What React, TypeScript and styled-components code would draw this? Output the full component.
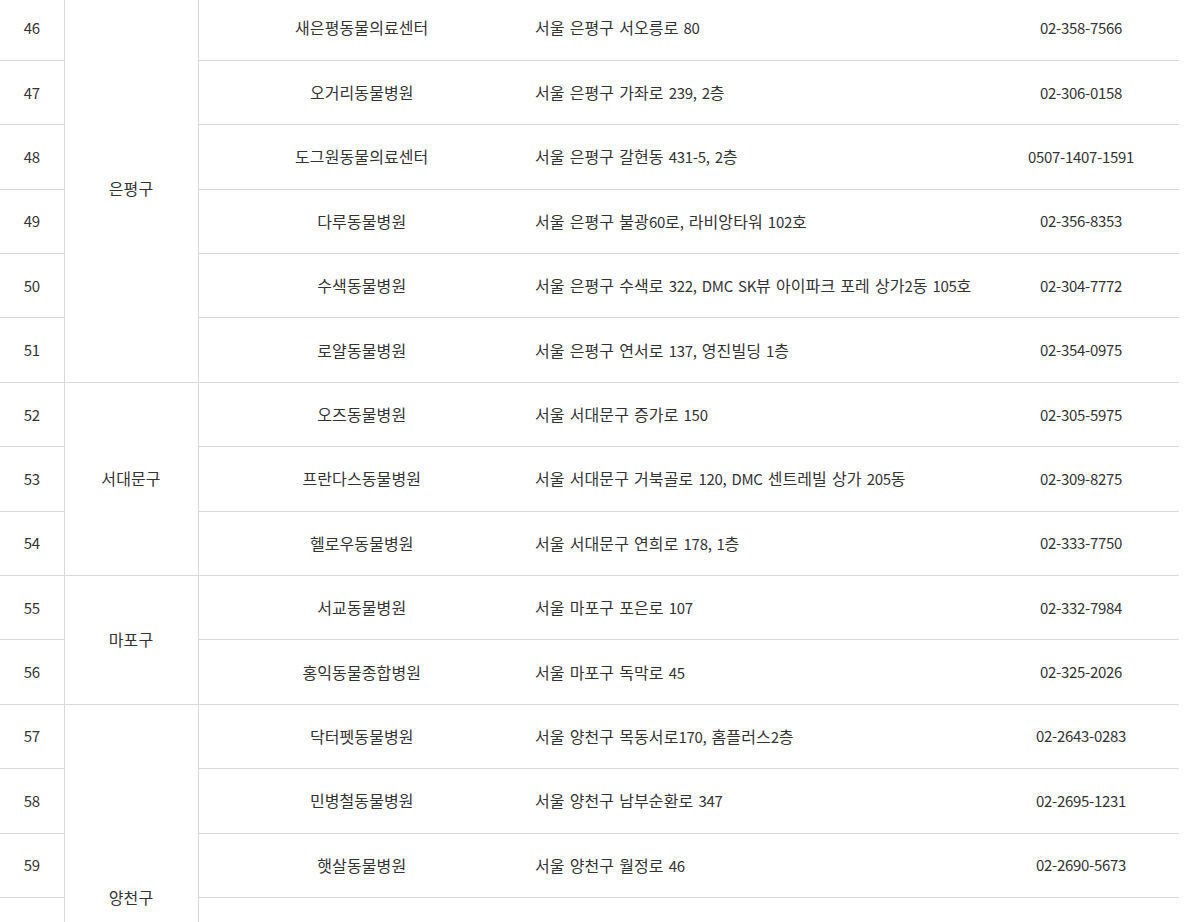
import React from 'react'
import styled, { createGlobalStyle } from 'styled-components'

const GlobalStyle = createGlobalStyle`
  html, body {
    margin: 0;
    padding: 0;
    background: #fff;
    overflow: hidden;
  }
  body {
    font-family: 'Noto Sans CJK KR', 'Noto Sans', sans-serif;
    color: #333;
  }
`

type Hospital = { no?: number; name: string; address: string; phone: string }
type District = { name: string; rows: Hospital[] }

const districts: District[] = [
  {
    name: '은평구',
    rows: [
      { no: 46, name: '새은평동물의료센터', address: '서울 은평구 서오릉로 80', phone: '02-358-7566' },
      { no: 47, name: '오거리동물병원', address: '서울 은평구 가좌로 239, 2층', phone: '02-306-0158' },
      { no: 48, name: '도그원동물의료센터', address: '서울 은평구 갈현동 431-5, 2층', phone: '0507-1407-1591' },
      { no: 49, name: '다루동물병원', address: '서울 은평구 불광60로, 라비앙타워 102호', phone: '02-356-8353' },
      { no: 50, name: '수색동물병원', address: '서울 은평구 수색로 322, DMC SK뷰 아이파크 포레 상가2동 105호', phone: '02-304-7772' },
      { no: 51, name: '로얄동물병원', address: '서울 은평구 연서로 137, 영진빌딩 1층', phone: '02-354-0975' },
    ],
  },
  {
    name: '서대문구',
    rows: [
      { no: 52, name: '오즈동물병원', address: '서울 서대문구 증가로 150', phone: '02-305-5975' },
      { no: 53, name: '프란다스동물병원', address: '서울 서대문구 거북골로 120, DMC 센트레빌 상가 205동', phone: '02-309-8275' },
      { no: 54, name: '헬로우동물병원', address: '서울 서대문구 연희로 178, 1층', phone: '02-333-7750' },
    ],
  },
  {
    name: '마포구',
    rows: [
      { no: 55, name: '서교동물병원', address: '서울 마포구 포은로 107', phone: '02-332-7984' },
      { no: 56, name: '홍익동물종합병원', address: '서울 마포구 독막로 45', phone: '02-325-2026' },
    ],
  },
  {
    name: '양천구',
    rows: [
      { no: 57, name: '닥터펫동물병원', address: '서울 양천구 목동서로170, 홈플러스2층', phone: '02-2643-0283' },
      { no: 58, name: '민병철동물병원', address: '서울 양천구 남부순환로 347', phone: '02-2695-1231' },
      { no: 59, name: '햇살동물병원', address: '서울 양천구 월정로 46', phone: '02-2690-5673' },
      // rows below the fold, only here so the district cell spans the right height
      { name: '', address: '', phone: '' },
      { name: '', address: '', phone: '' },
      { name: '', address: '', phone: '' },
    ],
  },
]

const Table = styled.table`
  width: 1179px;
  margin-top: -4px;
  border-collapse: collapse;
  table-layout: fixed;
  font-size: 15px;
  letter-spacing: -0.3px;
  word-spacing: 2px;
`

const Col = styled.col<{ $w: number }>`
  width: ${({ $w }) => $w}px;
`

const Row = styled.tr`
  height: 64.4px;
  border-bottom: 1px solid #d9d9d9;
`

const Cell = styled.td<{ $align?: 'left' | 'center' }>`
  padding: ${({ $align }) => ($align === 'left' ? '0 0 0 10px' : '0')};
  text-align: ${({ $align }) => $align ?? 'center'};
  vertical-align: middle;
  white-space: nowrap;
  line-height: 20px;
`

const DistrictCell = styled(Cell)`
  border-left: 1px solid #d9d9d9;
  border-right: 1px solid #d9d9d9;
  border-bottom: 1px solid #d9d9d9;
`

const Hangul = styled.span`
  font-size: 16px;
  letter-spacing: 0.1px;
`

function KText({ text }: { text: string }) {
  const parts = text.split(/([\uAC00-\uD7A3]+)/)
  return (
    <>
      {parts.map((p, i) => (i % 2 === 1 ? <Hangul key={i}>{p}</Hangul> : p))}
    </>
  )
}

export default function App() {
  let blank = 0
  return (
    <>
      <GlobalStyle />
      <Table>
        <colgroup>
          <Col $w={64} />
          <Col $w={134} />
          <Col $w={327} />
          <Col $w={458} />
          <Col $w={196} />
        </colgroup>
        <tbody>
          {districts.map((d) =>
            d.rows.map((r, i) => (
              <Row key={r.no ?? `blank-${blank++}`}>
                <Cell>{r.no}</Cell>
                {i === 0 && (
                  <DistrictCell rowSpan={d.rows.length}>
                    <KText text={d.name} />
                  </DistrictCell>
                )}
                <Cell>
                  <KText text={r.name} />
                </Cell>
                <Cell $align="left">
                  <KText text={r.address} />
                </Cell>
                <Cell>{r.phone}</Cell>
              </Row>
            ))
          )}
        </tbody>
      </Table>
    </>
  )
}
